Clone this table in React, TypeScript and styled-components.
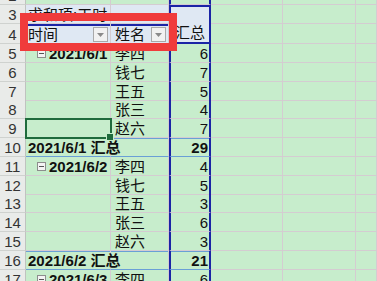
import React from 'react';
import styled, { createGlobalStyle } from 'styled-components';

const GlobalStyle = createGlobalStyle`
  body {
    margin: 0;
    background: #c7edcc;
    font-family: "Liberation Sans", "Noto Sans CJK SC", sans-serif;
  }
`;

type RowKind = 'plain' | 'title' | 'head' | 'item' | 'total';

interface IRow {
  n: number;
  h: number;
  kind: RowKind;
  date?: string;
  name?: string;
  value?: string;
  selected?: boolean;
}

const ROWS: IRow[] = [
  { n: 2, h: 19, kind: 'plain' },
  { n: 3, h: 19, kind: 'title' },
  { n: 4, h: 20, kind: 'head' },
  { n: 5, h: 18.8, kind: 'item', date: '2021/6/1', name: '李四', value: '6' },
  { n: 6, h: 18.8, kind: 'item', name: '钱七', value: '7' },
  { n: 7, h: 18.8, kind: 'item', name: '王五', value: '5' },
  { n: 8, h: 18.8, kind: 'item', name: '张三', value: '4' },
  { n: 9, h: 18.8, kind: 'item', name: '赵六', value: '7', selected: true },
  { n: 10, h: 18.8, kind: 'total', date: '2021/6/1 汇总', value: '29' },
  { n: 11, h: 18.8, kind: 'item', date: '2021/6/2', name: '李四', value: '4' },
  { n: 12, h: 18.8, kind: 'item', name: '钱七', value: '5' },
  { n: 13, h: 18.8, kind: 'item', name: '王五', value: '3' },
  { n: 14, h: 18.8, kind: 'item', name: '张三', value: '6' },
  { n: 15, h: 18.8, kind: 'item', name: '赵六', value: '3' },
  { n: 16, h: 18.8, kind: 'total', date: '2021/6/2 汇总', value: '21' },
  { n: 17, h: 18.8, kind: 'item', date: '2021/6/3', name: '李四', value: '6' },
];

const HEAD_BG = '#dfe8f3';
const NAVY = '#1b24a6';
const TOTAL_LINE = '#6a9fd6';

const Dropdown = () => (
  <DropButton>
    <svg width="7" height="4" viewBox="0 0 7 4">
      <path d="M0 0 L7 0 L3.5 4 Z" fill="#8a8a8a" />
    </svg>
  </DropButton>
);

const App = () => {
  return (
    <Page>
      <GlobalStyle />
      <Sheet>
        {ROWS.map((row) => {
          const isHead = row.kind === 'title' || row.kind === 'head';
          const isTotal = row.kind === 'total';
          return (
            <Row key={row.n} h={row.h}>
              <RowHead>{row.n}</RowHead>

              <Cell
                $bg={isHead ? HEAD_BG : undefined}
                $topLine={row.kind === 'head' ? NAVY : isTotal ? TOTAL_LINE : undefined}
                $bottomLine={isTotal ? TOTAL_LINE : undefined}
                $selected={row.selected}
                $pl={row.kind === 'item' ? 11 : 2}
              >
                {row.kind === 'title' && <Text>求和项:工时</Text>}
                {row.kind === 'head' && (
                  <>
                    <Text>时间</Text>
                    <Dropdown />
                  </>
                )}
                {row.kind === 'item' && row.date && (
                  <>
                    <Collapse />
                    <Text $bold>{row.date}</Text>
                  </>
                )}
                {isTotal && <Text $bold>{row.date}</Text>}
                {row.selected && <FillHandle />}
              </Cell>

              <Cell
                $bg={isHead ? HEAD_BG : undefined}
                $topLine={row.kind === 'head' ? NAVY : isTotal ? TOTAL_LINE : undefined}
                $bottomLine={isTotal ? TOTAL_LINE : undefined}
                $pl={4}
              >
                {row.kind === 'head' && (
                  <>
                    <Text>姓名</Text>
                    <Dropdown />
                  </>
                )}
                {row.name && <Text>{row.name}</Text>}
              </Cell>

              <ValueCell
                $bg={isHead ? HEAD_BG : undefined}
                $top={row.kind === 'title'}
                $headEnd={row.kind === 'head'}
                $noLine={row.kind === 'title'}
                $topLine={isTotal ? TOTAL_LINE : undefined}
                $bottomLine={isTotal ? TOTAL_LINE : undefined}
              >
                {row.kind === 'head' && <HeadLabel>汇总</HeadLabel>}
                {row.value && <Text $bold={isTotal}>{row.value}</Text>}
              </ValueCell>

              <Cell />
              <Cell />
              <Cell />
            </Row>
          );
        })}
      </Sheet>
      <Highlight />
    </Page>
  );
};

const Page = styled.div`
  position: relative;
  width: 377px;
  height: 281px;
  overflow: hidden;
  background: #c7edcc;
`;

const Sheet = styled.div`
  display: flex;
  flex-direction: column;
  margin-top: -14px;
`;

const Row = styled.div<{ h: number }>`
  display: grid;
  grid-template-columns: 26px 85px 58px 42px 72px 73px 1fr;
  height: ${({ h }) => h}px;
  flex-shrink: 0;
`;

const RowHead = styled.div`
  box-sizing: border-box;
  display: flex;
  align-items: center;
  justify-content: center;
  background: #e9ebe9;
  border-right: 1px solid #bfc3bf;
  border-bottom: 1px solid #cfd2cf;
  color: #333;
  font-size: 15px;
  padding-top: 1px;
`;

const Cell = styled.div<{
  $bg?: string;
  $topLine?: string;
  $bottomLine?: string;
  $selected?: boolean;
  $pl?: number;
}>`
  box-sizing: border-box;
  position: relative;
  display: flex;
  align-items: center;
  min-width: 0;
  padding-left: ${({ $pl }) => $pl ?? 2}px;
  padding-top: 1px;
  background: ${({ $bg }) => $bg ?? 'transparent'};
  border-right: 1px solid #d4ccd1;
  border-bottom: 1px solid ${({ $bottomLine }) => $bottomLine ?? '#d4ccd1'};
  ${({ $topLine }) => ($topLine ? `box-shadow: inset 0 ${$topLine === NAVY ? 2 : 1}px 0 ${$topLine};` : '')}
  ${({ $selected }) =>
    $selected
      ? `outline: 2px solid #1f6b3c; outline-offset: -1px; z-index: 2;`
      : ''}
  white-space: nowrap;
  overflow: visible;
`;

const ValueCell = styled.div<{
  $bg?: string;
  $top?: boolean;
  $headEnd?: boolean;
  $noLine?: boolean;
  $topLine?: string;
  $bottomLine?: string;
}>`
  box-sizing: border-box;
  position: relative;
  display: flex;
  align-items: center;
  justify-content: flex-end;
  padding-right: 1px;
  padding-top: 1px;
  background: ${({ $bg }) => $bg ?? 'transparent'};
  border-left: 2px solid ${NAVY};
  border-right: 2px solid ${NAVY};
  border-top: ${({ $top }) => ($top ? `2px solid ${NAVY}` : '0')};
  border-bottom: ${({ $headEnd, $noLine, $bottomLine }) =>
    $headEnd
      ? `2px solid ${NAVY}`
      : $noLine
      ? '0'
      : `1px solid ${$bottomLine ?? '#d4ccd1'}`};
  ${({ $topLine }) => ($topLine ? `box-shadow: inset 0 1px 0 ${$topLine};` : '')}
`;

const Text = styled.span<{ $bold?: boolean }>`
  font-size: 15px;
  line-height: 17px;
  color: #111;
  font-weight: ${({ $bold }) => ($bold ? 700 : 400)};
`;

const HeadLabel = styled.span`
  position: absolute;
  left: 4px;
  bottom: 1px;
  font-size: 15px;
  line-height: 17px;
  color: #111;
`;

const DropButton = styled.span`
  box-sizing: border-box;
  position: absolute;
  right: 2px;
  top: 3px;
  width: 15px;
  height: 15px;
  display: flex;
  align-items: center;
  justify-content: center;
  background: #f1f1f1;
  border: 1px solid #a9a9a9;
`;

const Collapse = styled.span`
  box-sizing: border-box;
  position: relative;
  width: 9px;
  height: 9px;
  margin-right: 3px;
  border: 1px solid #8d8d8d;
  background: #f4f4f4;
  flex-shrink: 0;

  &::after {
    content: '';
    position: absolute;
    left: 1px;
    right: 1px;
    top: 3px;
    height: 1px;
    background: #555;
  }
`;

const FillHandle = styled.span`
  position: absolute;
  right: -4px;
  bottom: -4px;
  width: 6px;
  height: 6px;
  background: #1f6b3c;
  border: 1px solid #c7edcc;
  z-index: 3;
`;

const Highlight = styled.div`
  box-sizing: border-box;
  position: absolute;
  left: 20px;
  top: 13px;
  width: 157px;
  height: 38px;
  border: 8px solid #f03b3b;
  z-index: 5;
  pointer-events: none;
`;

export default App;
